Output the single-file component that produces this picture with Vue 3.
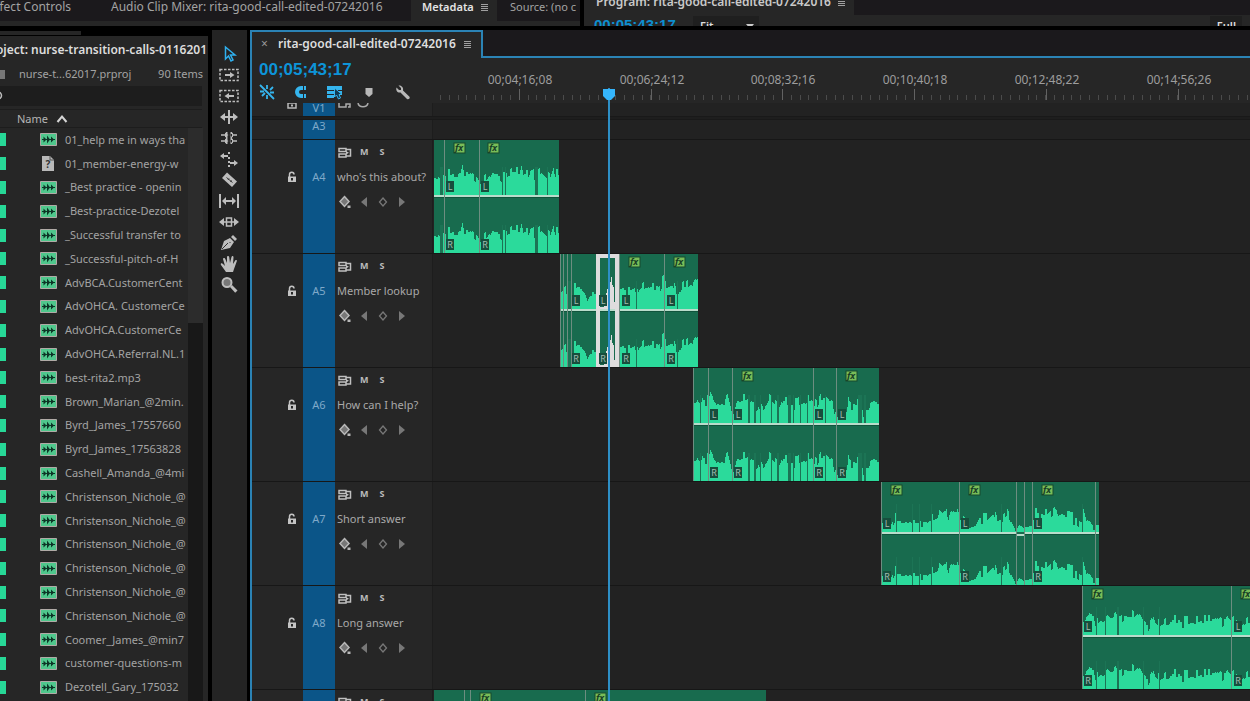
<script setup>
const audioFiles = [
  '01_help me in ways tha',
  '01_member-energy-w',
  '_Best practice - openin',
  '_Best-practice-Dezotel',
  '_Successful transfer to',
  '_Successful-pitch-of-H',
  'AdvBCA.CustomerCent',
  'AdvOHCA. CustomerCe',
  'AdvOHCA.CustomerCe',
  'AdvOHCA.Referral.NL.1',
  'best-rita2.mp3',
  'Brown_Marian_@2min.',
  'Byrd_James_17557660',
  'Byrd_James_17563828',
  'Cashell_Amanda_@4mi',
  'Christenson_Nichole_@',
  'Christenson_Nichole_@',
  'Christenson_Nichole_@',
  'Christenson_Nichole_@',
  'Christenson_Nichole_@',
  'Christenson_Nichole_@',
  'Coomer_James_@min7',
  'customer-questions-m',
  'Dezotell_Gary_175032',
].map((name, i) => ({ name, unknown: i === 1 }))

const tools = [
  { name: 'Selection', active: true, line: 'M6.5 3v12l3-3 2.5 5 2-1-2.500-5h4.500z' },
  { name: 'Track select forward', dash: true, fill: 'M6 9h5V7l4.500 3-4.500 3v-2H6z' },
  { name: 'Track select backward', dash: true, fill: 'M15 9h-5V7l-4.500 3 4.500 3v-2h5z' },
  { name: 'Ripple edit', fill: 'M9 3h2v14H9zM1 10l5-4v3h3v2H6v3zM19 10l-5-4v3h-3v2h3v3z' },
  { name: 'Rolling edit', fill: 'M7 4h1.500v12H7zM11.500 4H13v12h-1.500zM2 6.200h4V4.500L9.500 7 6 9.500V7.800H2zM18 6.200h-4V4.500L10.500 7 14 9.500V7.800h4zM2 12.200h4v-1.700L9.500 13 6 15.500v-1.700H2zM18 12.200h-4v-1.700L10.500 13l3.500 2.500v-1.700h4z' },
  { name: 'Rate stretch', fill: 'M1 7l4-3v2h4v2H5v2zM19 14l-4-3v2h-4v2h4v2zM9 3h2v2H9zM9 8h2v2H9zM9 12h2v2H9zM9 16h2v2H9z' },
  { name: 'Razor', fill: 'M8 2.500l10 9-5 5.500L3 8z', cut: 'M7.500 7.500l6 5M9 10l1-1.500M11.500 12l1-1.500' },
  { name: 'Slip', fill: 'M0 3h2v14H0zM18 3h2v14h-2zM3 10l4-4v3h6V6l4 4-4 4v-3H7v3z' },
  { name: 'Slide', fill: 'M0 10l5-4v8zM20 10l-5-4v8z', line: 'M7.500 6h5v8h-5zM5 10h10' },
  { name: 'Pen', fill: 'M2 17l3-9 6-3 4 4-4 6zM12 4l2-2 4 4-2 2z', cut: 'M3 16l6-6M10.500 9.500h1' },
  { name: 'Hand', fill: 'M7 18L2 11c-1-2 1-2.500 2-1l2 2L4 5c0-1.500 2-1.500 2.300 0L8 9V3c0-1.500 2-1.500 2.200 0L11 9l1.500-6c.5-1.500 2-1 2 .4L14 10l2.200-3.500c.8-1 2-.4 1.600.8L15 15l-1 3z' },
  { name: 'Zoom', fill: 'M11 12l2-2 5.500 5.500-2.300 2.300z', lens: true },
]

const major = Array.from({ length: 7 }, (_, i) => 86 + Math.round((i * 1317) / 10))
const minor = Array.from({ length: 110 }, (_, i) => Math.round(7 + i * 8.77))
const times = ['00;04;16;08', '00;06;24;12', '00;08;32;16', '00;10;40;18', '00;12;48;22', '00;14;56;26']
  .map((text, i) => ({ text, x: major[i] + 1 }))

// Repeatable pseudo-random value in 0..1 for a sample position.
function noise(n) {
  const v = Math.sin(n * 12.9898 + 4.1) * 43758.5453
  return v - Math.floor(v)
}

// Steps an amplitude envelope into one-pixel bars standing on a common baseline.
function wave(points, base, from, to) {
  let d = ''
  let k = 0
  for (let x = from; x < to; x++) {
    while (k < points.length - 2 && points[k + 1][0] <= x) k++
    const [x0, h0] = points[k]
    const [x1, h1] = points[k + 1]
    const t = Math.min(1, Math.max(0, (x - x0) / (x1 - x0)))
    const n = noise(Math.floor(x / 2))
    const jitter = n > 0.86 ? 6 : n < 0.14 ? -6 : (n - 0.5) * 5
    const h = Math.max(1, Math.round(h0 + (h1 - h0) * t + (h0 > 7 ? jitter : 0)))
    d += `M${x} ${base}v${-h}h1v${h}z`
  }
  return d
}

function clip(o) {
  const { w, h, mid } = o
  return {
    ...o,
    left: wave(o.env, mid - 1, 0, w),
    right: wave(o.env, h, 0, w),
    selLeft: o.sel ? wave(o.env, mid - 1, o.sel[0] + 4, o.sel[1] - 4) : '',
    selRight: o.sel ? wave(o.env, h, o.sel[0] + 4, o.sel[1] - 4) : '',
  }
}

const tracks = [
  {
    id: 'A4', name: "who's this about?", height: 114,
    clip: clip({
      x: 1, w: 125, h: 113, mid: 56, cuts: [10, 45], fx: [25, 59], tags: [16, 51], gaps: [[6, 3], [68, 1], [71, 1], [101, 3], [113, 1]],
      env: [[0, 18], [5, 16], [10, 20], [23, 19], [26, 23], [28, 30], [30, 20], [36, 23], [43, 18], [46, 13], [52, 15], [58, 22], [68, 19], [71, 27], [73, 18], [79, 22], [85, 22], [87, 31], [89, 20], [93, 19], [99, 26], [101, 16], [107, 24], [110, 20], [115, 16], [119, 26], [121, 20], [126, 20]],
    }),
  },
  {
    id: 'A5', name: 'Member lookup', height: 114,
    clip: clip({
      x: 127, w: 138, h: 113, mid: 56, cuts: [0, 3, 7, 11, 59, 104], fx: [74, 119], tags: [16, 43, 66, 111], gaps: [[8, 3], [76, 1], [117, 1]], sel: [36, 59],
      env: [[0, 17], [5, 22], [7, 5], [10, 6], [12, 20], [21, 21], [24, 16], [27, 9], [30, 14], [36, 17], [38, 2], [43, 2], [45, 13], [47, 22], [49, 16], [51, 26], [53, 22], [54, 7], [60, 20], [70, 20], [74, 21], [76, 12], [80, 19], [86, 23], [92, 20], [98, 22], [103, 28], [105, 22], [112, 25], [117, 12], [121, 21], [129, 23], [132, 22], [134, 29], [138, 31]],
    }),
  },
  {
    id: 'A6', name: 'How can I help?', height: 114,
    clip: clip({
      x: 260, w: 186, h: 113, mid: 56, cuts: [0, 15, 39, 120, 143], fx: [54, 158], tags: [21, 45, 126, 149], gaps: [[7, 1], [55, 2], [61, 2], [67, 1], [78, 1], [84, 2], [95, 3], [100, 1], [107, 1], [114, 1], [132, 1], [165, 4], [171, 2]],
      env: [[0, 20], [4, 22], [7, 16], [9, 24], [15, 22], [17, 30], [20, 24], [23, 19], [31, 19], [34, 30], [37, 18], [39, 6], [44, 23], [54, 23], [60, 21], [62, 8], [66, 20], [70, 14], [76, 23], [84, 15], [88, 21], [93, 20], [99, 18], [106, 20], [118, 22], [124, 16], [127, 23], [134, 25], [140, 20], [143, 6], [152, 7], [155, 20], [164, 18], [170, 12], [175, 12], [177, 22], [186, 19]],
    }),
  },
  {
    id: 'A7', name: 'Short answer', height: 104,
    clip: clip({
      x: 448, w: 218, h: 103, mid: 51, cuts: [0, 78, 135, 143, 151, 214], fx: [15, 93, 166], tags: [6, 84, 157], gaps: [[15, 1], [31, 1], [38, 1], [50, 1], [120, 1], [201, 1]], dips: [[135, 8]],
      env: [[0, 10], [10, 9], [13, 15], [15, 10], [35, 10], [55, 12], [58, 22], [62, 19], [65, 24], [68, 15], [70, 22], [75, 20], [78, 11], [84, 9], [88, 4], [94, 6], [98, 14], [105, 13], [112, 19], [115, 11], [122, 12], [126, 17], [129, 10], [134, 1], [138, 7], [142, 4], [150, 6], [151, 18], [165, 17], [173, 24], [177, 18], [190, 14], [200, 10], [202, 22], [205, 12], [214, 7], [218, 7]],
    }),
  },
  {
    id: 'A8', name: 'Long answer', height: 104,
    clip: clip({
      x: 649, w: 170, h: 103, mid: 50, cuts: [0, 149], fx: [15, 164], tags: [6, 156], gaps: [[14, 1], [23, 1], [35, 2], [61, 1], [77, 1]],
      env: [[0, 12], [7, 20], [12, 20], [14, 10], [22, 15], [25, 20], [29, 17], [34, 22], [38, 19], [44, 20], [52, 18], [57, 22], [61, 14], [66, 10], [71, 19], [73, 12], [78, 8], [84, 11], [90, 14], [103, 13], [118, 13], [132, 15], [137, 18], [140, 14], [146, 18], [149, 16], [152, 18], [155, 4], [160, 10], [170, 13]],
    }),
  },
  {
    id: 'A9', name: '', height: 114,
    clip: clip({
      x: 1, w: 332, h: 113, mid: 56, cuts: [30, 36, 151], fx: [51, 166], tags: [], gaps: [],
      env: [[0, 16], [332, 18]],
    }),
  },
]
</script>

<template>
  <div class="app">
    <header class="top">
      <nav class="source-tabs" aria-label="Source panels">
        <button class="tab cut">Effect Controls</button>
        <button class="tab mixer">Audio Clip Mixer: rita-good-call-edited-07242016</button>
        <button class="tab active">Metadata <i class="menu"></i></button>
        <button class="tab source">Source: (no c</button>
      </nav>
      <section class="program">
        <div class="program-tabs">
          <button class="program-tab">Program: rita-good-call-edited-07242016 <i class="menu"></i></button>
        </div>
        <div class="program-bar">
          <span class="program-time">00;05;43;17</span>
          <button class="drop">Fit <i class="arrow"></i></button>
          <button class="drop full">Full</button>
        </div>
      </section>
    </header>

    <main class="body">
      <aside class="project">
        <div class="hscroll"><i></i></div>
        <h2 class="project-title"><span>Project: nurse-transition-calls-0116201</span></h2>
        <div class="project-info">
          <i class="bin"></i><span class="file">nurse-t...62017.prproj</span><span>90 Items</span>
        </div>
        <label class="search">
          <svg viewBox="0 0 4 12" width="4" height="12"><path d="M-2 2a3.500 3.500 0 0 1 0 7" /></svg>
          <input type="search" aria-label="Search project" />
        </label>
        <button class="name-head">
          Name
          <svg viewBox="0 0 12 10" width="12" height="10"><path d="M1.500 8L6 2.500 10.500 8" /></svg>
        </button>
        <div class="list">
          <ul>
            <li v-for="(f, i) in audioFiles" :key="i">
              <i class="swatch"></i>
              <svg v-if="f.unknown" class="kind" viewBox="0 0 17 15" width="17" height="15">
                <path d="M2 0h8l4 4v11H2z" fill="#b9b9b9" />
                <path d="M10 0v4h4" fill="none" stroke="#555" />
                <text x="8" y="12" text-anchor="middle" font-size="10" font-weight="700" fill="#333">?</text>
              </svg>
              <svg v-else class="kind" viewBox="0 0 17 15" width="17" height="15">
                <path d="M.5 1.500h16v12H.5z" fill="#4fc78c" stroke="#b0aaa6" />
                <path d="M2 7h13v1H2zM3.500 4.500l3 3-3 3zM7 3.500l3 4-3 4zM11 4.500l3 3-3 3z" fill="#0d3526" />
              </svg>
              <span>{{ f.name }}</span>
            </li>
          </ul>
          <div class="vscroll"><i></i></div>
        </div>
      </aside>

      <aside class="tools" aria-label="Tools">
        <button v-for="t in tools" :key="t.name" :class="{ on: t.active }" :aria-label="t.name">
          <svg viewBox="0 0 20 20" width="20" height="20">
            <rect v-if="t.dash" class="line" x="1" y="4.500" width="18" height="11" stroke-dasharray="2.500 1.500" />
            <circle v-if="t.lens" cx="8" cy="7.500" r="4.500" fill="#777" stroke="currentColor" stroke-width="2" />
            <path v-if="t.fill" :d="t.fill" fill="currentColor" />
            <path v-if="t.line" :d="t.line" class="line" />
            <path v-if="t.cut" :d="t.cut" class="cutline" />
          </svg>
        </button>
      </aside>

      <section class="timeline">
        <div class="sequence-tabs">
          <div class="sequence-tab">
            <button class="close" aria-label="Close sequence">×</button>
            <button class="seq-name">rita-good-call-edited-07242016</button>
            <i class="menu"></i>
          </div>
          <div class="sequence-rest"></div>
        </div>

        <div class="timeline-head">
          <div class="head-left">
            <div class="timecode">00;05;43;17</div>
            <div class="head-icons">
              <button aria-label="Insert as nest">
                <svg viewBox="0 0 16 16" width="16" height="16"><path class="line thick" d="M1 1l14 14M8 1v4M3 12l3-3M1 7.500h4M11 6l3-3M11 8.500h4M8 11v4" /></svg>
              </button>
              <button aria-label="Snap">
                <svg viewBox="0 0 16 16" width="16" height="16"><path d="M13 4H8a4 4 0 0 0 0 8h5" fill="none" stroke="currentColor" stroke-width="4" /><path d="M10.500 1v14" stroke="#262626" /></svg>
              </button>
              <button aria-label="Linked selection">
                <svg viewBox="0 0 16 16" width="16" height="16"><path d="M0 2h15v4H0zM0 7h7v3H0zM0 11h7v3H0zM12 7h3v3h-3z" fill="currentColor" /><path d="M7.500 4v9l2-2 2 4 2-1-1.500-3.500h3z" fill="#123b52" stroke="currentColor" /></svg>
              </button>
              <button class="grey" aria-label="Add marker">
                <svg viewBox="0 0 16 16" width="16" height="16"><path d="M4.500 4h7v6L8 13l-3.500-3z" fill="currentColor" /></svg>
              </button>
              <button class="grey" aria-label="Timeline settings">
                <svg viewBox="0 0 16 16" width="16" height="16"><path d="M3.500 1.500L6 4v2H4L1.500 3.500c-1 3 1 5.500 4 5l6.500 6.500c1.500 1 3.500-.8 2.500-2.300L8 6.500c.7-3-1.500-5.500-4.500-5z" fill="currentColor" /></svg>
              </button>
            </div>
          </div>
          <svg class="ruler" height="45" width="100%">
            <text v-for="t in times" :key="t.text" :x="t.x" y="26" text-anchor="middle">{{ t.text }}</text>
            <rect v-for="x in minor" :key="'m' + x" :x="x" y="37" width="1" height="5" fill="#4b4b4b" />
            <rect v-for="x in major" :key="x" :x="x" y="31" width="1" height="11" fill="#626262" />
          </svg>
        </div>

        <div class="track video">
          <div class="lock"><svg viewBox="0 0 10 7" width="10" height="7"><path d="M1 0h8v5H1z" fill="none" stroke="#bbb" stroke-width="1.500" /><path d="M4 1.500h2v2H4z" fill="#bbb" /></svg></div>
          <div class="target">V1</div>
          <div class="controls">
            <svg viewBox="0 0 36 7" width="36" height="7"><path d="M2 0v4h7V1h4v3h-2M21 0c1 5 9 5 10 0" fill="none" stroke="#aaa" stroke-width="1.500" /></svg>
          </div>
          <div class="lane"></div>
        </div>
        <div class="divider"></div>
        <div class="track small">
          <div class="lock"></div><div class="target">A3</div><div class="controls"></div><div class="lane"></div>
        </div>

        <div v-for="t in tracks" :key="t.id" class="track" :class="t.height === 114 ? 'tall' : 'short'">
          <div class="lock">
            <button v-if="t.name" aria-label="Toggle track lock">
              <svg viewBox="0 0 10 12" width="10" height="12"><path d="M2.500 6V3.500c0-3 4.500-3 4.500 0" fill="none" stroke="#c4c4c4" stroke-width="1.500" /><path d="M1 5.500h8V11H1z" fill="#c4c4c4" /><path d="M4 7h2v2.500H4z" fill="#262626" /></svg>
            </button>
          </div>
          <button v-if="t.name" class="target">{{ t.id }}</button>
          <div v-else class="target"></div>
          <div class="controls">
            <div class="row toggles">
              <button aria-label="Toggle sync lock">
                <svg viewBox="0 0 14 11" width="14" height="11"><path d="M1 1.500h7v3H1zM1 7h7v3H1zM8 2.500h4.500V9H8" fill="none" stroke="#c0c0c0" stroke-width="1.500" /><path d="M8 4l3 1.800L8 7.500z" fill="#c0c0c0" /></svg>
              </button>
              <button>M</button>
              <button>S</button>
            </div>
            <template v-if="t.name">
              <div class="row name">{{ t.name }}</div>
              <div class="row keys">
                <button aria-label="Show keyframes">
                  <svg viewBox="0 0 14 14" width="14" height="14"><path d="M7.500 1.500l4.500 5-4.500 5L3 6.500z" fill="#777" stroke="#b8b8b8" stroke-width="1.500" /><path d="M10.500 10.500h3v2.500h-3z" fill="#b8b8b8" /></svg>
                </button>
                <button aria-label="Previous keyframe">
                  <svg viewBox="0 0 14 14" width="14" height="14"><path d="M11 2v10L5 7z" fill="#777" /></svg>
                </button>
                <button aria-label="Add keyframe">
                  <svg viewBox="0 0 14 14" width="14" height="14"><path d="M8 3l3.500 4L8 11 4.500 7z" fill="none" stroke="#777" stroke-width="1.300" /></svg>
                </button>
                <button aria-label="Next keyframe">
                  <svg viewBox="0 0 14 14" width="14" height="14"><path d="M5 2v10l6-5z" fill="#777" /></svg>
                </button>
              </div>
            </template>
          </div>
          <svg class="lane" width="100%" :height="t.height - 1">
            <g :transform="`translate(${t.clip.x} 0)`">
              <rect :width="t.clip.w" :height="t.clip.h" fill="#186b4e" />
              <path :d="t.clip.left" fill="#2bda9b" />
              <path :d="t.clip.right" fill="#2bda9b" />
              <g v-for="g in t.clip.gaps" :key="'g' + g[0]" fill="#1c7455">
                <rect :x="g[0]" :y="t.clip.mid - 29" :width="g[1]" height="28" />
                <rect :x="g[0]" :y="t.clip.h - 28" :width="g[1]" height="28" />
              </g>
              <rect :y="t.clip.mid + 1" :width="t.clip.w" height="1" fill="#10543c" />
              <rect :y="t.clip.mid - 1" :width="t.clip.w" height="2" fill="#b9dccb" />
              <g v-for="d in t.clip.dips || []" :key="'d' + d[0]">
                <rect :x="d[0]" :y="t.clip.mid - 1" :width="d[1]" height="2" fill="#186b4e" />
                <rect :x="d[0]" :y="t.clip.mid + 1" :width="d[1]" height="2" fill="#b9dccb" />
              </g>
              <rect v-for="c in t.clip.cuts" :key="'c' + c" :x="c" width="1" :height="t.clip.h" fill="#6d8d80" />
              <g v-if="t.clip.sel">
                <path fill="none" stroke="#dedcdd" stroke-width="4" :d="`M${t.clip.sel[0] + 2} 2H${t.clip.sel[1] - 2}V${t.clip.h}M${t.clip.sel[0] + 2} 0V${t.clip.h}`" />
                <path :d="t.clip.selLeft" fill="#dedcdd" />
                <path :d="t.clip.selRight" fill="#dedcdd" />
              </g>
              <g v-for="x in t.clip.tags" :key="'t' + x" class="tag">
                <rect :x="x - 4" :y="t.clip.mid - 15" width="8" height="11" />
                <text :x="x" :y="t.clip.mid - 6">L</text>
                <rect :x="x - 4" :y="t.clip.h - 14" width="8" height="11" />
                <text :x="x" :y="t.clip.h - 5">R</text>
              </g>
              <g v-for="x in t.clip.fx" :key="'f' + x" class="fx">
                <rect :x="x - 5" y="3" width="11" height="10" />
                <text :x="x" y="11">fx</text>
              </g>
            </g>
          </svg>
        </div>

        <div class="playhead">
          <svg viewBox="0 0 12 12" width="12" height="12"><path d="M0 1h12v7l-4 4H4L0 8z" fill="#35b5fb" /></svg>
        </div>
      </section>
    </main>
  </div>
</template>

<style>
html, body { background: #000; }
</style>

<style scoped>
.app { height: 100vh; overflow: hidden; display: flex; flex-direction: column; gap: 4px; background: #000; color: #a3a3a3; font: 11px/16px "Noto Sans", "Open Sans", sans-serif; }
button { border: 0; padding: 0; margin: 0; background: none; color: inherit; font: inherit; white-space: nowrap; display: block; }
svg { display: block; flex: none; }
i { display: block; flex: none; }
.line { fill: none; stroke: currentColor; stroke-width: 1.500; }
.thick { stroke-width: 1.800; }
.cutline { fill: none; stroke: #333; stroke-width: 1; }
.menu { width: 7px; height: 7px; background: repeating-linear-gradient(#a0a0a0 0 1px, transparent 1px 2px); }

.top { height: 26px; flex: none; display: flex; gap: 4px; overflow: hidden; }
.source-tabs { width: 580px; flex: none; display: flex; background: #1b191c; border-bottom: 5px solid #262626; box-sizing: border-box; overflow: hidden; }
.tab { height: 21px; padding-bottom: 7px; box-sizing: border-box; font-size: 12px; line-height: 14px; }
.cut { width: 71px; display: flex; justify-content: flex-end; overflow: hidden; flex: none; }
.mixer { width: 340px; text-align: left; padding-left: 40px; flex: none; }
.active { width: 86px; flex: none; display: flex; align-items: center; justify-content: space-between; padding: 0 9px 7px 11px; background: #262626; color: #e3e3e3; font-size: 11px; font-weight: 600; }
.source { padding-left: 13px; font-size: 11px; }
.program { flex: 1; background: #262626; overflow: hidden; }
.program-tabs { height: 15px; background: #1b191c; overflow: hidden; }
.program-tab { width: 270px; height: 15px; display: flex; align-items: center; justify-content: space-between; padding: 0 9px 11px 12px; box-sizing: border-box; background: #262626; color: #c9c9c9; font-size: 12px; font-weight: 600; }
.program-bar { display: flex; align-items: flex-start; padding: 1px 8px 0 10px; }
.program-time { font: 700 15px/18px "Liberation Sans", Arial, sans-serif; color: #0d8fd0; width: 99px; }
.drop { height: 18px; display: flex; align-items: center; padding: 2px 5px 0 7px; background: #1f1f1f; color: #ddd; font-weight: 600; gap: 32px; }
.arrow { border: 4px solid transparent; border-top: 5px solid #ccc; border-bottom: 0; }
.full { margin-left: auto; padding-right: 6px; }

.body { flex: 1; min-height: 0; display: flex; }
.project { width: 208px; flex: none; display: flex; flex-direction: column; background: #262626; overflow: hidden; }
.hscroll { height: 6px; flex: none; background: #000; padding-top: 1px; box-sizing: border-box; }
.hscroll i { width: 81px; height: 4px; background: #262626; }
.project-title { margin: 0; height: 28px; flex: none; display: flex; justify-content: flex-end; align-items: center; font-size: 12px; font-weight: 600; color: #dcdcdc; white-space: nowrap; overflow: hidden; padding-right: 1px; }
.project-info { display: flex; align-items: center; height: 20px; flex: none; padding-right: 5px; }
.bin { width: 5px; height: 9px; background: #777; margin-right: 14px; }
.file { flex: 1; }
.search { display: flex; align-items: center; height: 20px; margin: 2px 6px 0 0; flex: none; background: #1d1d1d; }
.search path { fill: none; stroke: #bbb; stroke-width: 1.500; }
.search input { flex: 1; min-width: 0; border: 0; background: none; color: #ccc; outline: 0; height: 16px; padding: 0 4px; }
.name-head { display: flex; align-items: center; gap: 8px; height: 19px; margin: 3px 6px 0 0; flex: none; padding-left: 17px; background: #262626; border-top: 1px solid #1d1d1d; border-bottom: 1px solid #1d1d1d; box-sizing: border-box; color: #b5b5b5; }
.name-head path { fill: none; stroke: #d5d5d5; stroke-width: 2; }
.list { flex: 1; min-height: 0; display: flex; }
ul { list-style: none; margin: 0; padding: 0 0 2px; width: 187px; display: flex; flex-direction: column; box-sizing: border-box; }
li { flex: 1; min-height: 0; display: flex; align-items: center; overflow: hidden; white-space: nowrap; }
.swatch { width: 6px; height: 13px; background: #27d897; margin-right: 34px; }
.kind { margin-right: 8px; }
.vscroll { width: 15px; background: #181818; margin-left: 1px; }
.vscroll i { height: 34%; background: #2c2c2c; }

.tools { width: 35px; flex: none; margin: 0 3px 0 4px; background: #242424; padding: 13px 2px 0 0; box-sizing: border-box; color: #bdbdbd; display: flex; flex-direction: column; align-items: center; }
.tools button { height: 21px; }
.tools .on { color: #2fb0ee; }

.timeline { flex: 1; min-width: 0; position: relative; display: flex; flex-direction: column; background: #262626; border-left: 2px solid #2b83b5; overflow: hidden; }
.sequence-tabs { display: flex; height: 28px; flex: none; }
.sequence-tab { width: 231px; height: 28px; box-sizing: border-box; border-top: 2px solid #2b83b5; border-right: 2px solid #2b83b5; display: flex; align-items: center; padding: 0 10px 2px 9px; color: #dedede; font-size: 12px; font-weight: 600; }
.close { font-weight: 400; color: #999; width: 17px; text-align: left; }
.seq-name { flex: 1; text-align: left; }
.sequence-rest { flex: 1; background: #1b191c; border-bottom: 2px solid #2b83b5; }
.timeline-head { display: flex; height: 45px; flex: none; }
.head-left { width: 181px; flex: none; }
.timecode { font: 700 17px/24px "Liberation Sans", Arial, sans-serif; color: #0d94d8; padding-left: 7px; }
.head-icons { display: flex; gap: 18px; padding: 2px 0 0 7px; color: #35b5ee; }
.grey { color: #b8b8b8; }
.ruler { flex: 1; min-width: 0; }
.ruler text { font-size: 12px; fill: #9d9d9d; }

.track { display: grid; grid-template-columns: 51px 32px 98px 1fr; flex: none; border-bottom: 1px solid #171717; box-sizing: border-box; overflow: hidden; }
.tall { height: 114px; }
.short { height: 104px; }
.video { height: 13px; border: 0; }
.small { height: 20px; }
.divider { height: 4px; flex: none; background: #1e1e1e; border-top: 1px solid #191919; border-bottom: 1px solid #191919; box-sizing: border-box; }
.target { background: #0b5588; color: #7fa9c9; text-align: center; line-height: 72px; display: block; height: calc(100% + 1px); padding-bottom: 42px; box-sizing: border-box; }
.short .target { padding-bottom: 32px; }
.video .target { line-height: 10px; padding: 0; }
.small .target { line-height: 12px; padding: 0; height: 20px; }
.lock { padding: 31px 0 0 35px; }
.video .lock { padding: 0 0 0 35px; }
.small .lock { padding: 0; }
.controls { padding-left: 2px; border-right: 1px solid #1d1d1d; box-sizing: border-box; white-space: nowrap; }
.row { display: flex; align-items: center; height: 25px; color: #a9a9a9; }
.toggles { gap: 8px; height: 24px; font-size: 9px; font-weight: 700; padding-left: 1px; color: #bbb; }
.toggles button + button + button { margin-left: 3px; }
.keys { gap: 5px; }
.lane { background: #222; min-width: 0; overflow: hidden; }
.tag rect { fill: #174e3d; }
.tag text { font-size: 9px; fill: #a3bdb1; text-anchor: middle; }
.fx rect { fill: #79bd58; stroke: #174a2c; stroke-width: 1; }
.fx text { font-size: 9px; font-weight: 700; font-style: italic; fill: #173f25; text-anchor: middle; }
.playhead { position: absolute; left: 351px; top: 58px; bottom: 0; width: 12px; background: linear-gradient(#2d8fc6, #2d8fc6) center / 2px 100% no-repeat; pointer-events: none; }
</style>
